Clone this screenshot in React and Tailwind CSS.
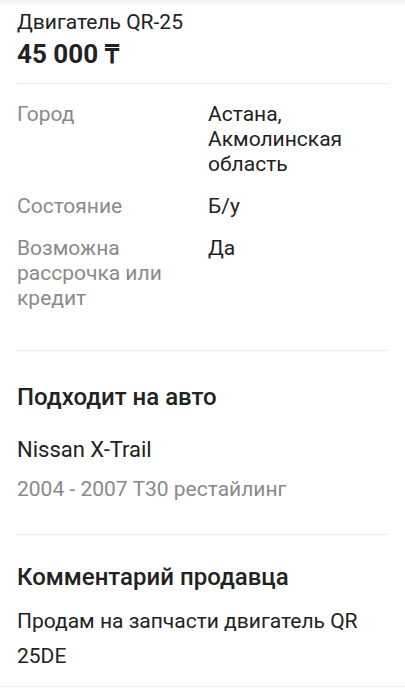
import React from "react";

const rows = [
  { label: "Город", value: "Астана, Акмолинская область" },
  { label: "Состояние", value: "Б/у" },
  { label: "Возможна рассрочка или кредит", value: "Да" },
];

const App = () => {
  return (
    <div className="w-[405px] min-h-[700px] bg-white text-[#222222] font-['Roboto',sans-serif] overflow-hidden">
      <div className="h-[6px] bg-gradient-to-b from-[#f0f0f0] to-white" />
      <div className="px-[17px]">
        <h1 className="text-[21px] leading-[26px] mt-[3px]">Двигатель QR-25</h1>
        <div className="text-[26px] leading-[32px] font-bold mt-[3px]">45 000 ₸</div>
        <div className="h-px bg-[#ececec] mt-[13px]" />

        <div className="flex flex-col gap-[17px] mt-[18px]">
          {rows.map((row) => (
            <div key={row.label} className="grid grid-cols-[191px_1fr] text-[21px] leading-[25px]">
              <div className="text-[#8a8a8a] pr-[20px]">{row.label}</div>
              <div className="pr-[20px]">{row.value}</div>
            </div>
          ))}
        </div>
        <div className="h-px bg-[#ececec] mt-[39px]" />

        <h2 className="text-[24px] leading-[30px] font-medium mt-[31px]">Подходит на авто</h2>
        <div className="text-[22px] leading-[28px] mt-[24px]">Nissan X-Trail</div>
        <div className="text-[21px] leading-[26px] text-[#8a8a8a] mt-[12px]">2004 - 2007 T30 рестайлинг</div>
        <div className="h-px bg-[#ececec] mt-[32px]" />

        <h2 className="text-[24px] leading-[30px] font-medium mt-[27px]">Комментарий продавца</h2>
        <p className="text-[21px] leading-[35px] mt-[12px]">Продам на запчасти двигатель QR 25DE</p>
      </div>
      <div className="h-px bg-[#efefef] mt-[12px]" />
    </div>
  );
};

export default App;
